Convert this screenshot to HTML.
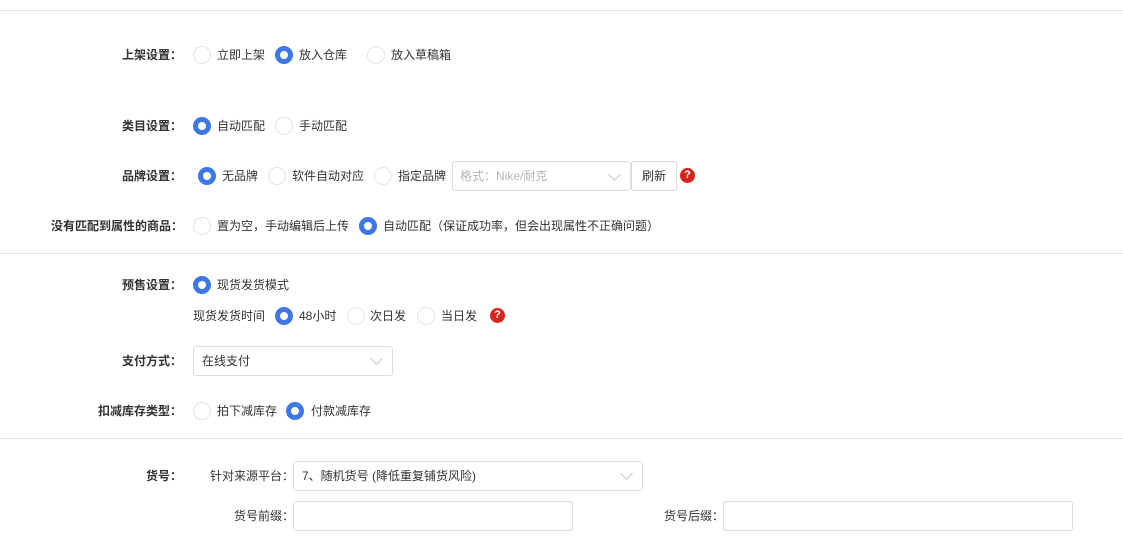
<!DOCTYPE html>
<html><head><meta charset="utf-8"><style>
body{margin:0;width:1123px;height:541px;background:#fff;position:relative;overflow:hidden;font-family:"Liberation Sans","Noto Sans CJK SC",sans-serif;font-size:12px;color:#333}
.a{position:absolute;white-space:nowrap;line-height:16px}
.l{font-weight:bold;text-align:right;width:200px}
.r{position:absolute;width:16px;height:16px;border:1px solid #e3e3e3;border-radius:50%;box-sizing:content-box;background:#fff}
.s{border:5px solid #3d77e8;width:8px;height:8px}
.line{position:absolute;left:0;width:1123px;height:1px;background:#e3e3e3}
.box{position:absolute;border:1px solid #dcdcdc;border-radius:3px;box-sizing:border-box;background:#fff}
.chev{position:absolute;width:8px;height:8px;border-right:1px solid #c8c8c8;border-bottom:1px solid #c8c8c8;transform:rotate(45deg)}
.q{position:absolute;width:15px;height:15px;border-radius:50%;background:#d4261c;color:#fff;font-weight:bold;font-size:11px;text-align:center;line-height:15px}
</style></head><body>
<div class="line" style="top:10px"></div>

<div class="a l" style="left:-18px;top:47px">上架设置：</div>
<div class="r" style="left:193px;top:46px"></div><div class="a" style="left:217px;top:47px">立即上架</div>
<div class="r s" style="left:275px;top:46px"></div><div class="a" style="left:299px;top:47px">放入仓库</div>
<div class="r" style="left:367px;top:46px"></div><div class="a" style="left:391px;top:47px">放入草稿箱</div>

<div class="a l" style="left:-18px;top:118px">类目设置：</div>
<div class="r s" style="left:193px;top:117px"></div><div class="a" style="left:217px;top:118px">自动匹配</div>
<div class="r" style="left:275px;top:117px"></div><div class="a" style="left:299px;top:118px">手动匹配</div>

<div class="a l" style="left:-18px;top:168px">品牌设置：</div>
<div class="r s" style="left:198px;top:167px"></div><div class="a" style="left:222px;top:168px">无品牌</div>
<div class="r" style="left:268px;top:167px"></div><div class="a" style="left:292px;top:168px">软件自动对应</div>
<div class="r" style="left:374px;top:167px"></div><div class="a" style="left:398px;top:168px">指定品牌</div>
<div class="box" style="left:452px;top:161px;width:179px;height:30px"></div>
<div class="a" style="left:460px;top:168px;color:#b5b5b5">格式：Nike/耐克</div>
<div class="chev" style="left:610px;top:170px"></div>
<div class="box" style="left:631px;top:161px;width:46px;height:30px"></div>
<div class="a" style="left:642px;top:168px">刷新</div>
<div class="q" style="left:680px;top:168px">?</div>

<div class="a l" style="left:-17px;top:218px">没有匹配到属性的商品：</div>
<div class="r" style="left:193px;top:217px"></div><div class="a" style="left:217px;top:218px">置为空，手动编辑后上传</div>
<div class="r s" style="left:359px;top:217px"></div><div class="a" style="left:383px;top:218px">自动匹配（保证成功率，但会出现属性不正确问题）</div>

<div class="line" style="top:253px"></div>

<div class="a l" style="left:-18px;top:277px">预售设置：</div>
<div class="r s" style="left:193px;top:276px"></div><div class="a" style="left:217px;top:277px">现货发货模式</div>
<div class="a" style="left:193px;top:308px">现货发货时间</div>
<div class="r s" style="left:275px;top:307px"></div><div class="a" style="left:299px;top:308px">48小时</div>
<div class="r" style="left:347px;top:307px"></div><div class="a" style="left:370px;top:308px">次日发</div>
<div class="r" style="left:417px;top:307px"></div><div class="a" style="left:441px;top:308px">当日发</div>
<div class="q" style="left:490px;top:308px">?</div>

<div class="a l" style="left:-18px;top:353px">支付方式：</div>
<div class="box" style="left:193px;top:346px;width:200px;height:30px"></div>
<div class="a" style="left:202px;top:353px">在线支付</div>
<div class="chev" style="left:372px;top:354px"></div>

<div class="a l" style="left:-18px;top:403px">扣减库存类型：</div>
<div class="r" style="left:193px;top:402px"></div><div class="a" style="left:217px;top:403px">拍下减库存</div>
<div class="r s" style="left:286px;top:402px"></div><div class="a" style="left:311px;top:403px">付款减库存</div>

<div class="line" style="top:438px"></div>

<div class="a l" style="left:-18px;top:468px">货号：</div>
<div class="a" style="left:94px;top:468px;width:200px;text-align:right">针对来源平台：</div>
<div class="box" style="left:293px;top:461px;width:350px;height:30px"></div>
<div class="a" style="left:302px;top:468px">7、随机货号 (降低重复铺货风险)</div>
<div class="chev" style="left:622px;top:469px"></div>

<div class="a" style="left:94px;top:508px;width:200px;text-align:right">货号前缀：</div>
<div class="box" style="left:293px;top:501px;width:280px;height:30px"></div>
<div class="a" style="left:524px;top:508px;width:200px;text-align:right">货号后缀：</div>
<div class="box" style="left:723px;top:501px;width:350px;height:30px"></div>
</body></html>
